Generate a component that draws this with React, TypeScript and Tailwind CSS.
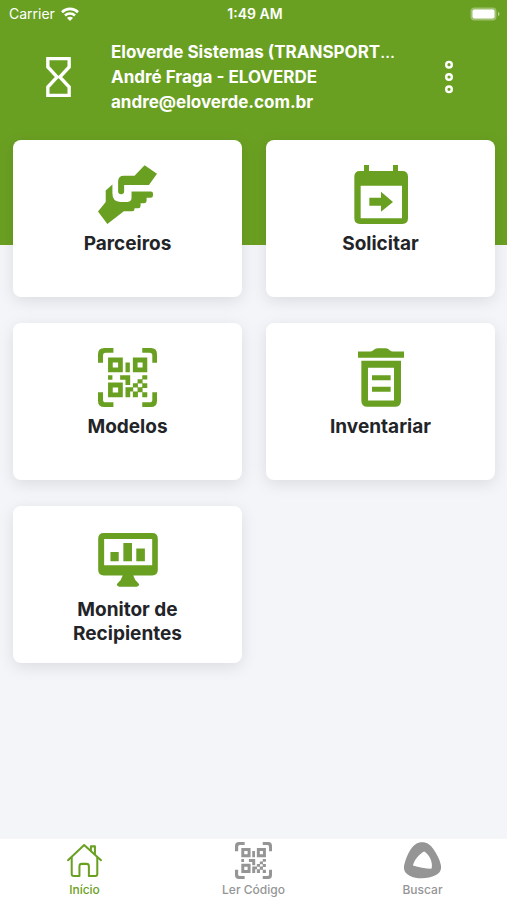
import React from 'react';

interface IconProps {
  className?: string;
}

const WifiIcon: React.FC<IconProps> = ({ className }) => (
  <svg viewBox="0 0 18 14" className={className} fill="none" stroke="currentColor" strokeWidth="2.6" aria-hidden="true">
    <path d="M1 5.2a11.4 11.4 0 0 1 16 0" />
    <path d="M4 8.5a7.2 7.2 0 0 1 10 0" />
    <path d="M9 14 6 10.9a4.2 4.2 0 0 1 6 0z" fill="currentColor" stroke="none" />
  </svg>
);

const BatteryIcon: React.FC<IconProps> = ({ className }) => (
  <svg viewBox="0 0 31 14" className={className} fill="currentColor" aria-hidden="true">
    <rect x="0.5" y="0.5" width="26" height="13" rx="4" fillOpacity="0.35" />
    <rect x="2.5" y="2.5" width="22" height="9" rx="2" />
    <path d="M28 4.8c2 .8 2 3.6 0 4.4z" fillOpacity="0.5" />
  </svg>
);

const HourglassIcon: React.FC<IconProps> = ({ className }) => (
  <svg viewBox="138 170 74 120" className={className} fill="none" stroke="currentColor" strokeWidth="10" aria-hidden="true">
    <path d="M143 175h64v25l-28 30 28 30v25h-64v-25l28-30-28-30z" />
  </svg>
);

const DotsIcon: React.FC<IconProps> = ({ className }) => (
  <svg viewBox="0 0 10 34" className={className} fill="none" stroke="currentColor" strokeWidth="2.4" aria-hidden="true">
    <circle cx="5" cy="4.7" r="2.8" />
    <circle cx="5" cy="17" r="2.8" />
    <circle cx="5" cy="29.3" r="2.8" />
  </svg>
);

const HandsIcon: React.FC<IconProps> = ({ className }) => (
  <svg viewBox="56 43 176 176" className={className} fill="currentColor" aria-hidden="true">
    <path d="M195 44 232 69 208 103H134v18a9 9 0 0 1-18 0V92q0-17 17-17h32z" />
    <path d="M56 182 79 153V119l20-18v27q0 25 24 25h21q12 0 12-12V122h58q6 0 6 6v6q0 7-7 7h-12v9q0 7-7 7h-11v8q0 7-7 7h-11v2q0 7-7 7h-25L84 219z" />
  </svg>
);

const CalendarIcon: React.FC<IconProps> = ({ className }) => (
  <svg viewBox="72 43 162 177" className={className} fill="currentColor" aria-hidden="true">
    <path
      fillRule="evenodd"
      d="M102 43h15v18h72V43h15v18h13q17 0 17 17v125q0 17-17 17H90q-17 0-17-17V78q0-17 17-17h12zM92 105v98h124v-98z"
    />
    <path d="M118 141h35v-18l36 31-36 29v-18h-35z" />
  </svg>
);

const QrScanIcon: React.FC<IconProps> = ({ className }) => (
  <svg viewBox="56 38 176 176" className={className} fill="currentColor" aria-hidden="true">
    <path d="M56 82V57q0-19 19-19h27v14H79q-8 0-8 8v22zM188 38h26q18 0 18 19v25h-14V60q0-8-8-8h-22zM56 170h15v22q0 8 8 8h23v14H75q-19 0-19-19zM218 170h14v25q0 19-18 19h-26v-14h22q8 0 8-8z" />
    <path
      fillRule="evenodd"
      d="M86 66h44v44H86zM100 81v15h16V81zM160 66h43v44h-43zM174 81v15h15V81zM86 141h44v44H86zM100 156v15h16v-15z"
    />
    <path d="M138 81h13v29h-13zM86 119h13v14H86zM122 119h30v29h-14v-15h-16zM188 119h15v13h-15zM174 131h15v13h-15zM160 143h15v13h-15zM188 143h15v14h-15zM138 155h23v13h-9v17h-14zM174 155h15v15h-15zM160 168h15v17h-15zM188 170h15v15h-15z" />
  </svg>
);

const TrashIcon: React.FC<IconProps> = ({ className }) => (
  <svg viewBox="114 38 138 176" className={className} fill="currentColor" aria-hidden="true">
    <path d="M114 48h36q6 0 10-4 6-6 13-6h24q7 0 12 6 4 4 10 4h33v19H114z" />
    <path fillRule="evenodd" d="M124 76h119v120q0 18-18 18h-83q-18 0-18-18zM144 97v98h78V97z" />
    <path d="M156 119h56v15h-56zM156 154h56v15h-56z" />
  </svg>
);

const MonitorIcon: React.FC<IconProps> = ({ className }) => (
  <svg viewBox="114 40 180 163" className={className} fill="currentColor" aria-hidden="true">
    <path
      fillRule="evenodd"
      d="M131 40h146q17 0 17 17v94q0 17-17 17h-57l6 14 12 13q-1 7-8 7h-52q-7 0-8-7l12-13 6-14h-57q-17 0-17-17V57q0-17 17-17zM132 58v79h145V58z"
    />
    <path d="M151 97h25v28h-25zM190 70h26v55h-26zM229 87h26v38h-26z" />
  </svg>
);

const HomeIcon: React.FC<IconProps> = ({ className }) => (
  <svg viewBox="54 38 104 102" className={className} fill="none" stroke="currentColor" strokeWidth="6" strokeLinejoin="round" strokeLinecap="round" aria-hidden="true">
    <path d="M57 88 105 43l50 45" />
    <path d="M68 81v48q0 6 6 6h17v-29q0-7 7-7h14q7 0 7 7v29h19q6 0 6-6V81" />
    <path d="M125 59V47h12v23" />
  </svg>
);

const BuscarIcon: React.FC<IconProps> = ({ className }) => (
  <svg viewBox="42 34 112 112" className={className} fill="currentColor" aria-hidden="true">
    <path
      fillRule="evenodd"
      d="M97 35c15 0 26 8 35 22 10 15 17 29 21 44 4 17-2 27-16 34-22 11-56 12-78 1-14-7-20-17-16-34 4-16 10-31 19-45 9-14 20-22 35-22zM103 63c-15 8-29 24-34 42 17 6 39 9 56 10 6-18-6-43-22-52z"
    />
  </svg>
);

const menuItems = [
  { label: 'Parceiros', icon: <HandsIcon className="h-[59px] w-[59px]" /> },
  { label: 'Solicitar', icon: <CalendarIcon className="h-[59px] w-[54px]" /> },
  { label: 'Modelos', icon: <QrScanIcon className="h-[59px] w-[59px]" /> },
  { label: 'Inventariar', icon: <TrashIcon className="h-[59px] w-[46px]" /> },
  { label: 'Monitor de Recipientes', icon: <MonitorIcon className="h-[54px] w-[60px]" /> },
];

const tabs = [
  { label: 'Início', icon: <HomeIcon className="h-[35px] w-[35px]" />, active: true },
  { label: 'Ler Código', icon: <QrScanIcon className="h-[37px] w-[37px]" />, active: false },
  { label: 'Buscar', icon: <BuscarIcon className="h-[37px] w-[37px]" />, active: false },
];

const App: React.FC = () => {
  return (
    <div className="flex min-h-screen flex-col bg-[#f4f5f9] font-['Inter',sans-serif]">
      {/* Green header, the first row of cards overlaps its lower part */}
      <header className="bg-[#6aa022] pb-[105px] text-white">
        <div className="grid h-7 grid-cols-3 items-center pr-[6px] pl-[9px] text-sm">
          <div className="flex items-center gap-[6px]">
            <span>Carrier</span>
            <WifiIcon className="h-[14px] w-[18px]" />
          </div>
          <span className="text-center font-semibold">1:49 AM</span>
          <BatteryIcon className="h-[14px] w-[31px] justify-self-end" />
        </div>

        <div className="flex h-28 items-start pt-3">
          <div className="flex h-[74px] w-[111px] shrink-0 items-center pl-[46px]">
            <HourglassIcon className="h-10 w-[25px]" />
          </div>
          <div className="flex min-w-0 flex-1 flex-col gap-px text-[17px] leading-[24px] font-bold">
            <p className="truncate">Eloverde Sistemas (TRANSPORT<span className="font-normal">…</span></p>
            <p className="truncate">André Fraga - ELOVERDE</p>
            <p className="truncate">andre@eloverde.com.br</p>
          </div>
          <button type="button" aria-label="Mais opções" className="flex h-[74px] w-[105px] shrink-0 items-center justify-start pl-[42px]">
            <DotsIcon className="h-[34px] w-[10px]" />
          </button>
        </div>
      </header>

      <main className="-mt-[105px] grid flex-1 grid-cols-2 content-start gap-x-6 gap-y-[26px] pr-3 pb-6 pl-[13px]">
        {menuItems.map((item) => (
          <button
            key={item.label}
            type="button"
            className="flex h-[157px] flex-col items-center rounded-lg bg-white px-10 pt-6 text-[#222428] shadow-[0_4px_16px_rgba(0,0,0,0.1)]"
          >
            <span className="flex h-[60px] items-center text-[#6aa022]">{item.icon}</span>
            <span className="mt-2 text-[19px] leading-[24px] font-bold">{item.label}</span>
          </button>
        ))}
      </main>

      <nav className="sticky bottom-0 grid h-[62px] grid-cols-3 border-t border-[#f7f7fa] bg-white">
        {tabs.map((tab) => (
          <a
            key={tab.label}
            href="#"
            className={`flex flex-col items-center pt-[2px] text-xs ${tab.active ? 'text-[#6aa022]' : 'text-[#959595]'}`}
          >
            <span className="flex h-[38px] items-center">{tab.icon}</span>
            <span className="mt-[3px] leading-4 font-medium">{tab.label}</span>
          </a>
        ))}
      </nav>
    </div>
  );
};

export default App;
